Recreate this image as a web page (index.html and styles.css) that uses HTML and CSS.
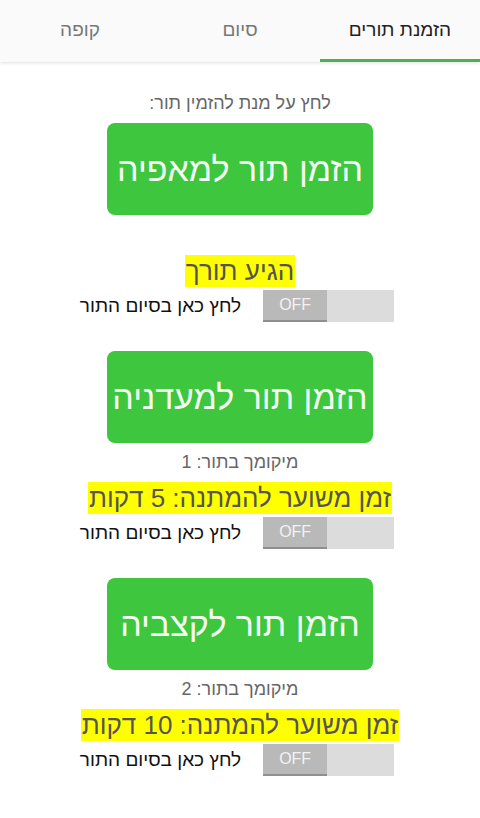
FILE: index.html
```html
<!DOCTYPE html>
<html lang="he" dir="rtl">
<head>
    <meta charset="UTF-8">
    <meta name="viewport" content="width=device-width, initial-scale=1.0">
    <title>הזמנת תורים</title>
    <link rel="stylesheet" href="styles.css">
</head>
<body>
    <nav class="tabs">
        <div class="tab active">הזמנת תורים</div>
        <div class="tab">סיום</div>
        <div class="tab">קופה</div>
    </nav>

    <main class="content">
        <section class="shop first">
            <p class="hint">לחץ על מנת להזמין תור:</p>
            <button class="order-btn">הזמן תור למאפיה</button>
            <p class="highlight turn">הגיע תורך</p>
            <div class="done-row">
                <div class="switch"><span class="thumb">OFF</span></div>
                <span class="done-label">לחץ כאן בסיום התור</span>
            </div>
        </section>

        <section class="shop">
            <button class="order-btn">הזמן תור למעדניה</button>
            <p class="position">מיקומך בתור: 1</p>
            <p class="highlight">זמן משוער להמתנה: 5 דקות</p>
            <div class="done-row">
                <div class="switch"><span class="thumb">OFF</span></div>
                <span class="done-label">לחץ כאן בסיום התור</span>
            </div>
        </section>

        <section class="shop">
            <button class="order-btn">הזמן תור לקצביה</button>
            <p class="position">מיקומך בתור: 2</p>
            <p class="highlight">זמן משוער להמתנה: 10 דקות</p>
            <div class="done-row">
                <div class="switch"><span class="thumb">OFF</span></div>
                <span class="done-label">לחץ כאן בסיום התור</span>
            </div>
        </section>
    </main>
</body>
</html>
```

FILE: styles.css
```css
:root {
    --green: #3ec63e;
    --tab-line: #4caf50;
    --yellow: #ffff00;
    --gray-text: #666666;
    --track: #dcdcdc;
    --thumb: #b9b9b9;
}

body {
    margin: 0;
    font-family: "Liberation Sans", "DejaVu Sans", sans-serif;
    background-color: #ffffff;
    color: #111111;
}

.tabs {
    display: flex;
    height: 62px;
    background-color: #fafafa;
    box-shadow: 0 1px 3px rgba(0, 0, 0, 0.12);
}

.tab {
    flex: 1;
    display: flex;
    align-items: center;
    justify-content: center;
    font-size: 19px;
    color: #777777;
    border-bottom: 3px solid transparent;
    box-sizing: border-box;
}

.tab.active {
    color: #222222;
    border-bottom-color: var(--tab-line);
}

.content {
    display: flex;
    flex-direction: column;
    align-items: center;
    padding-top: 30px;
}

.shop {
    display: flex;
    flex-direction: column;
    align-items: center;
    margin-bottom: 29px;
}

.hint {
    margin: 0 0 9px;
    font-size: 18px;
    line-height: 22px;
    color: var(--gray-text);
}

.order-btn {
    width: 266px;
    height: 92px;
    padding: 0;
    border: none;
    border-radius: 8px;
    background-color: var(--green);
    color: #f4fff4;
    font-family: inherit;
    font-size: 34px;
    white-space: nowrap;
    cursor: pointer;
}

.position {
    margin: 8px 0 9px;
    font-size: 18px;
    line-height: 22px;
    color: var(--gray-text);
}

.highlight {
    margin: 0;
    padding: 0 1px;
    background-color: var(--yellow);
    color: #555555;
    font-size: 26px;
    line-height: 32px;
}

.turn {
    margin-top: 40px;
}

.done-row {
    display: flex;
    align-items: center;
    gap: 22px;
    margin-top: 3px;
    margin-right: 6px;
}

.switch {
    width: 131px;
    height: 32px;
    background-color: var(--track);
    display: flex;
}

.thumb {
    width: 64px;
    height: 30px;
    margin-right: auto;
    background-color: var(--thumb);
    border-bottom: 2px solid #8f8f8f;
    color: #f2f2f2;
    font-size: 16px;
    display: flex;
    align-items: center;
    justify-content: center;
}

.done-label {
    font-size: 19px;
    color: #111111;
}
```
